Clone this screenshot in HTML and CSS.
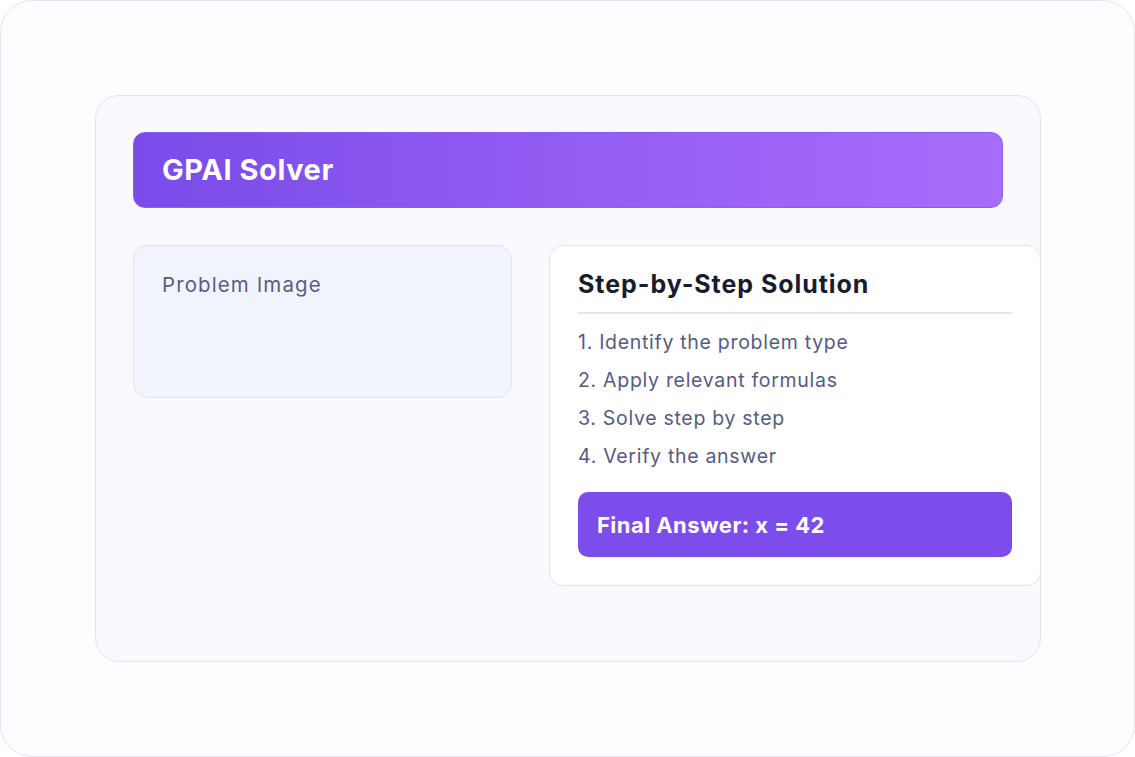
FILE: index.html
```html
<!DOCTYPE html>
<html>
<head>
<meta charset="utf-8">
<link rel="stylesheet" href="styles.css">
</head>
<body>
<div class="frame">
  <div class="card">
    <div class="header">GPAI Solver</div>
    <div class="row">
      <div class="image-panel">Problem Image</div>
      <div class="solution">
        <h2 class="title">Step-by-Step Solution</h2>
        <ol class="steps">
          <li>1. Identify the problem type</li>
          <li>2. Apply relevant formulas</li>
          <li>3. Solve step by step</li>
          <li>4. Verify the answer</li>
        </ol>
        <div class="answer">Final Answer: x = 42</div>
      </div>
    </div>
  </div>
</div>
</body>
</html>
```
FILE: styles.css
```css
* { box-sizing: border-box; }
html, body { margin: 0; padding: 0; background: #ffffff; }
body { font-family: Inter, "Noto Sans", sans-serif; }
.frame {
  width: 1135px;
  height: 757px;
  border: 1px solid #e6e4f3;
  border-radius: 32px;
  background: #fdfdff;
  padding: 94px 94px 0 94px;
}
.card {
  width: 946px;
  height: 567px;
  border: 1px solid #e3e2f1;
  border-radius: 24px;
  background: #f9f9fe;
  padding: 36px 37px 37px 37px;
  overflow: hidden;
}
.header {
  height: 76px;
  border-radius: 12px;
  background: linear-gradient(90deg, #7a4be9 0%, #9860f5 60%, #a76cf9 100%);
  border: 1px solid #8a5ef0;
  color: #fff;
  font-weight: 700;
  font-size: 29px;
  letter-spacing: 0.55px;
  display: flex;
  align-items: center;
  padding-left: 28px;
  padding-bottom: 2px;
}
.row {
  display: grid;
  grid-template-columns: 379px 492px;
  gap: 37px;
  margin-top: 37px;
  align-items: start;
}
.image-panel {
  height: 153px;
  background: #f1f4fc;
  border: 1px solid #e2e5ef;
  border-radius: 14px;
  padding: 27px 28px;
  color: #5a5f80;
  font-size: 20.5px;
  letter-spacing: 1.1px;
  line-height: 24px;
}
.solution {
  background: #ffffff;
  border: 1px solid #e3e3f0;
  border-radius: 14px;
  padding: 22px 28px 28px 28px;
}
.title {
  margin: 0;
  font-size: 25px;
  font-weight: 700;
  letter-spacing: 0.95px;
  color: #1a1b2e;
  line-height: 32px;
  padding-bottom: 12px;
  border-bottom: 2px solid #e6e6f2;
}
.steps {
  list-style: none;
  margin: 0;
  padding: 9px 0 0 0;
}
.steps li {
  color: #565b80;
  font-size: 19.5px;
  letter-spacing: 0.7px;
  line-height: 38px;
}
.answer {
  margin-top: 17px;
  height: 65px;
  border-radius: 10px;
  background: #7c4dea;
  color: #fff;
  font-weight: 700;
  font-size: 22px;
  letter-spacing: 0.45px;
  display: flex;
  align-items: center;
  padding-left: 19px;
}
```
